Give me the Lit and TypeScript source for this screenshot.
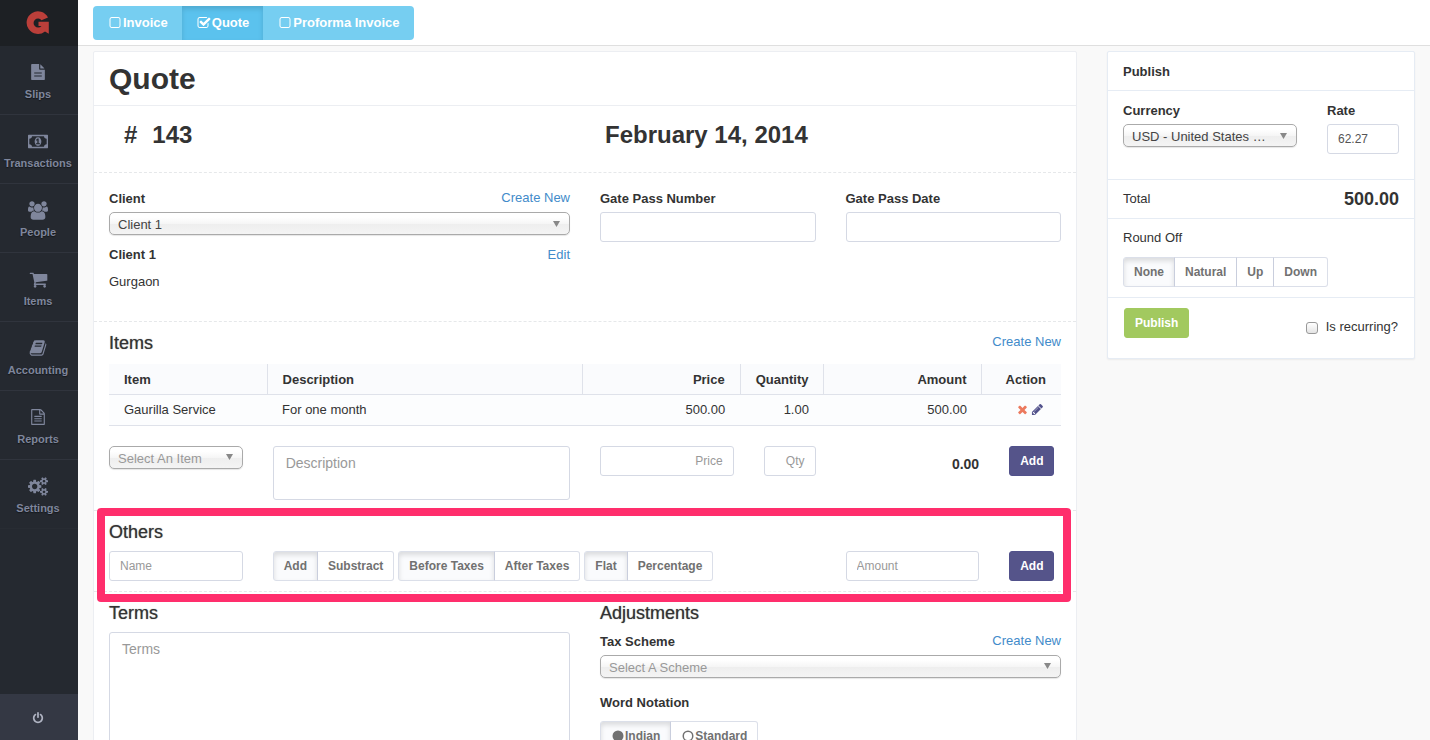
import { LitElement, html, svg, css } from "lit";
import { customElement, property } from "lit/decorators.js";
import { classMap } from "lit/directives/class-map.js";

const lines = (y: number) =>
  `M1312 ${y}v64q0 14-9 23t-23 9h-768q-14 0-23-9t-9-23v-64q0-14 9-23t23-9h768q14 0 23 9t9 23z`;

const ICONS: Record<string, { w: number; d: string }> = {
  slips: {
    w: 1792,
    d: "M1596 476q14 14 28 36h-472v-472q22 14 36 28zm-476 164h544v1056q0 40-28 68t-68 28h-1344q-40 0-68-28t-28-68v-1600q0-40 28-68t68-28h800v544q0 40 28 68t68 28zm200 736v-64q0-14-9-23t-23-9h-784q-14 0-23 9t-9 23v64q0 14 9 23t23 9h784q14 0 23-9t9-23zm0-336v-64q0-14-9-23t-23-9h-784q-14 0-23 9t-9 23v64q0 14 9 23t23 9h784q14 0 23-9t9-23z",
  },
  money: {
    w: 1920,
    d: "M768 1152h384v-96h-128v-448h-114l-148 137 77 80q42-37 55-57h2v288h-128v96zm512-256q0 70-21 142t-59.5 134-101.5 101-138 39-138-39-101.5-101-59.5-134-21-142 21-142 59.5-134 101.5-101 138-39 138 39 101.5 101 59.5 134 21 142zm512 256v-512q-106 0-181-75t-75-181h-1152q0 106-75 181t-181 75v512q106 0 181 75t75 181h1152q0-106 75-181t181-75zm128-832v1152q0 26-19 45t-45 19h-1792q-26 0-45-19t-19-45v-1152q0-26 19-45t45-19h1792q26 0 45 19t19 45z",
  },
  people: {
    w: 1920,
    d: "M593 896q-162 5-265 128h-134q-82 0-138-40.5t-56-118.5q0-353 124-353 6 0 43.5 21t97.5 42.5 119 21.5q67 0 133-23-5 37-5 66 0 139 81 256zm1071 637q0 120-73 189.5t-194 69.5h-874q-121 0-194-69.5t-73-189.5q0-53 3.5-103.5t14-109 26.5-108.5 43-97.5 62-81 85.5-53.5 111.5-20q10 0 43 21.5t73 48 107 48 135 21.5 135-21.5 107-48 73-48 43-21.5q61 0 111.5 20t85.5 53.5 62 81 43 97.5 26.5 108.5 14 109 3.5 103.5zm-1024-1277q0 106-75 181t-181 75-181-75-75-181 75-181 181-75 181 75 75 181zm704 384q0 159-112.5 271.5t-271.5 112.5-271.5-112.5-112.5-271.5 112.5-271.5 271.5-112.5 271.5 112.5 112.5 271.5zm576 225q0 78-56 118.5t-138 40.5h-134q-103-123-265-128 81-117 81-256 0-29-5-66 66 23 133 23 59 0 119-21.5t97.5-42.5 43.5-21q124 0 124 353zm-128-609q0 106-75 181t-181 75-181-75-75-181 75-181 181-75 181 75 75 181z",
  },
  cart: {
    w: 1792,
    d: "M704 1536q0 52-38 90t-90 38-90-38-38-90 38-90 90-38 90 38 38 90zm896 0q0 52-38 90t-90 38-90-38-38-90 38-90 90-38 90 38 38 90zm128-1088v512q0 24-16.5 42.5t-40.5 21.5l-1044 122q13 60 13 70 0 16-24 64h920q26 0 45 19t19 45-19 45-45 19h-1024q-26 0-45-19t-19-45q0-11 8-31.5t16-36 21.5-40 15.5-29.5l-177-823h-204q-26 0-45-19t-19-45 19-45 45-19h256q16 0 28.5 6.5t19.5 15.5 13 24.5 8 26 5.5 29.5 4.5 26h1201q26 0 45 19t19 45z",
  },
  book: {
    w: 1792,
    d: "M1703 478q40 57 18 129l-275 906q-19 64-76.5 107.5t-122.5 43.5h-923q-77 0-148.5-53.5t-99.5-131.5q-24-67-2-127 0-4 3-27t4-37q1-8-3-21.5t-3-19.5q2-11 8-21t16.5-23.5 16.5-23.5q23-38 45-91.5t30-91.5q3-10 .5-30t-.5-28q3-11 17-28t17-23q21-36 42-92t25-90q1-9-2.5-32t.5-28q4-13 22-30.5t22-22.5q19-26 42.5-84.5t27.5-96.5q1-8-3-25.5t-2-26.5q2-8 9-18t18-23 17-21q8-12 16.5-30.5t15-35 16-36 19.5-32 26.5-23.5 36-11.5 47.5 5.5l-1 3q38-9 51-9h761q74 0 114 56t18 130l-274 906q-36 119-71.5 153.5t-128.5 34.5h-869q-27 0-38 15-11 16-1 43 24 70 144 70h923q29 0 56-15.5t35-41.5l300-987q7-22 5-57 38 15 59 43zm-1064 2q-4 13 2 22.5t20 9.5h608q13 0 25.5-9.5t16.5-22.5l21-64q4-13-2-22.5t-20-9.5h-608q-13 0-25.5 9.5t-16.5 22.5zm-83 256q-4 13 2 22.5t20 9.5h608q13 0 25.5-9.5t16.5-22.5l21-64q4-13-2-22.5t-20-9.5h-608q-13 0-25.5 9.5t-16.5 22.5z",
  },
  report: {
    w: 1792,
    d:
      "M1596 380q28 28 48 76t20 88v1152q0 40-28 68t-68 28h-1344q-40 0-68-28t-28-68v-1600q0-40 28-68t68-28h896q40 0 88 20t76 48zm-444-244v376h376q-10-29-22-41l-313-313q-12-12-41-22zm384 1528v-1024h-416q-40 0-68-28t-28-68v-416h-768v1536h1280z" +
      lines(800) +
      lines(1056) +
      lines(1312),
  },
  cogs: {
    w: 1920,
    d: "M896 896q0-106-75-181t-181-75-181 75-75 181 75 181 181 75 181-75 75-181zm768 512q0-52-38-90t-90-38-90 38-38 90q0 53 37.5 90.5t90.5 37.5 90.5-37.5 37.5-90.5zm0-1024q0-52-38-90t-90-38-90 38-38 90q0 53 37.5 90.5t90.5 37.5 90.5-37.5 37.5-90.5zm-384 421v185q0 10-7 19.5t-16 10.5l-155 24q-11 35-32 76 34 48 90 115 7 11 7 20 0 12-7 19-23 30-82.5 89.5t-78.5 59.5q-11 0-21-7l-115-90q-37 19-77 31-11 108-23 155-7 24-30 24h-186q-11 0-20-7.5t-10-17.5l-23-153q-34-10-75-31l-118 89q-7 7-20 7-11 0-21-8-144-133-144-160 0-9 7-19 10-14 41-53t47-61q-23-44-35-82l-152-24q-10-1-17-9.5t-7-19.5v-185q0-10 7-19.5t16-10.5l155-24q11-35 32-76-34-48-90-115-7-11-7-20 0-12 7-20 22-30 82-89t79-59q11 0 21 7l115 90q34-18 77-32 11-108 23-154 7-24 30-24h186q11 0 20 7.5t10 17.5l23 153q34 10 75 31l118-89q8-7 20-7 11 0 21 8 144 133 144 160 0 8-7 19-12 16-42 54t-45 60q23 48 34 82l152 23q10 2 17 10.5t7 19.5zm640 533v140q0 16-149 31-12 27-30 52 51 113 51 138 0 4-4 7-122 71-124 71-8 0-46-47t-52-68q-20 2-30 2t-30-2q-14 21-52 68t-46 47q-2 0-124-71-4-3-4-7 0-25 51-138-18-25-30-52-149-15-149-31v-140q0-16 149-31 13-29 30-52-51-113-51-138 0-4 4-7 4-2 35-20t59-34 30-16q8 0 46 46.5t52 67.5q20-2 30-2t30 2q51-71 92-112l6-2q4 0 124 70 4 3 4 7 0 25-51 138 17 23 30 52 149 15 149 31zm0-1024v140q0 16-149 31-12 27-30 52 51 113 51 138 0 4-4 7-122 71-124 71-8 0-46-47t-52-68q-20 2-30 2t-30-2q-14 21-52 68t-46 47q-2 0-124-71-4-3-4-7 0-25 51-138-18-25-30-52-149-15-149-31v-140q0-16 149-31 13-29 30-52-51-113-51-138 0-4 4-7 4-2 35-20t59-34 30-16q8 0 46 46.5t52 67.5q20-2 30-2t30 2q51-71 92-112l6-2q4 0 124 70 4 3 4 7 0 25-51 138 17 23 30 52 149 15 149 31z",
  },
  power: {
    w: 1792,
    d: "M1664 896q0 156-61 298t-164 245-245 164-298 61-298-61-245-164-164-245-61-298q0-182 80.5-343t226.5-270q43-32 95.5-25t83.5 50q32 42 24.5 94.5t-49.5 84.5q-98 74-151.5 181t-53.5 228q0 104 40.5 198.5t109.5 163.5 163.5 109.5 198.5 40.5 198.5-40.5 163.5-109.5 109.5-163.5 40.5-198.5q0-121-53.5-228t-151.5-181q-42-32-49.5-84.5t24.5-94.5q31-43 84-50t95 25q146 109 226.5 270t80.5 343zm-640-768v640q0 52-38 90t-90 38-90-38-38-90v-640q0-52 38-90t90-38 90 38 38 90z",
  },
  times: {
    w: 1792,
    d: "M1490 1322q0 40-28 68l-136 136q-28 28-68 28t-68-28l-294-294-294 294q-28 28-68 28t-68-28l-136-136q-28-28-28-68t28-68l294-294-294-294q-28-28-28-68t28-68l136-136q28-28 68-28t68 28l294 294 294-294q28-28 68-28t68 28l136 136q28 28 28 68t-28 68l-294 294 294 294q28 28 28 68z",
  },
  pencil: {
    w: 1792,
    d: "M491 1536l91-91-235-235-91 91v107h128v128h107zm523-928q0-22-22-22-10 0-17 7l-542 542q-7 7-7 17 0 22 22 22 10 0 17-7l542-542q7-7 7-17zm-54-192l416 416-832 832h-416v-416zm683 96q0 53-37 90l-166 166-416-416 166-165q36-38 90-38 53 0 91 38l235 234q37 39 37 91z",
  },
  square: {
    w: 1792,
    d: "M1312 256h-832q-66 0-113 47t-47 113v832q0 66 47 113t113 47h832q66 0 113-47t47-113v-832q0-66-47-113t-113-47zm288 160v832q0 119-84.5 203.5t-203.5 84.5h-832q-119 0-203.5-84.5t-84.5-203.5v-832q0-119 84.5-203.5t203.5-84.5h832q119 0 203.5 84.5t84.5 203.5z",
  },
  check: {
    w: 1792,
    d: "M1472 930v318q0 119-84.5 203.5t-203.5 84.5h-832q-119 0-203.5-84.5t-84.5-203.5v-832q0-119 84.5-203.5t203.5-84.5h832q63 0 117 25 15 7 18 23 3 17-9 29l-49 49q-10 10-23 10-3 0-9-2-23-6-45-6h-832q-66 0-113 47t-47 113v832q0 66 47 113t113 47h832q66 0 113-47t47-113v-254q0-13 9-22l64-64q10-10 23-10 6 0 12 3 20 8 20 29zm231-489l-814 814q-24 24-57 24t-57-24l-430-430q-24-24-24-57t24-57l110-110q24-24 57-24t57 24l263 263 647-647q24-24 57-24t57 24l110 110q24 24 24 57t-24 57z",
  },
  disc: { w: 1792, d: "M896 192a704 704 0 1 0 0 1408a704 704 0 1 0 0-1408z" },
  ring: {
    w: 1792,
    d: "M896 192a704 704 0 1 0 0 1408a704 704 0 1 0 0-1408zm0 190a514 514 0 1 1 0 1028a514 514 0 1 1 0-1028z",
  },
};

const icon = (name: string, height: number) => {
  const { w, d } = ICONS[name];
  return html`<svg
    aria-hidden="true"
    viewBox="0 0 ${w} 1792"
    width=${Math.round((height * w) / 1792)}
    height=${height}
  >
    ${svg`<path fill="currentColor" fill-rule="evenodd" d=${d}></path>`}
  </svg>`;
};

const base = css`
  * {
    box-sizing: border-box;
  }
  svg {
    display: block;
    flex: none;
  }
`;

@customElement("side-nav")
class SideNav extends LitElement {
  static styles = [
    base,
    css`
      :host {
        display: flex;
        flex-direction: column;
        background: #252930;
      }
      .brand {
        display: flex;
        align-items: center;
        justify-content: center;
        height: 46px;
        padding-right: 2px;
        background: #1d2024;
      }
      .menu {
        flex: 1;
        margin: 0;
        padding: 0;
        list-style: none;
      }
      .link {
        display: flex;
        flex-direction: column;
        align-items: center;
        gap: 5px;
        height: 69px;
        padding: 17px 2px 0 0;
        border-bottom: 1px solid #30343d;
        color: #7f869c;
        font-size: 11px;
        line-height: 16px;
        font-weight: bold;
        text-decoration: none;
        text-shadow: 0 1px 1px #15181c;
      }
      .glyph {
        display: flex;
        align-items: center;
        height: 18px;
      }
      .item:last-child .link {
        border-bottom-color: #282c33;
      }
      .power {
        display: flex;
        align-items: center;
        justify-content: center;
        height: 46px;
        padding: 2px 2px 0 0;
        border: 0;
        background: #343844;
        color: #b0b4c3;
      }
    `,
  ];
  render() {
    const items: [string, string, number][] = [
      ["slips", "Slips", 16],
      ["money", "Transactions", 19],
      ["people", "People", 19],
      ["cart", "Items", 19],
      ["book", "Accounting", 18],
      ["report", "Reports", 16],
      ["cogs", "Settings", 19],
    ];
    return html`
      <a class="brand" href="#" aria-label="Home">
        <svg width="24" height="24" viewBox="0 0 24 24" aria-hidden="true">
          <path
            d="M22 6.500L15.500 9.200A4.500 4.500 0 1 0 15.500 15H12.500V10.800H22.800V22.800L19 20.400A11.300 11.300 0 1 1 22 6.500z"
            fill="#bb3f3a"
          />
        </svg>
      </a>
      <ul class="menu">
        ${items.map(
          ([name, text, size]) => html`<li class="item">
            <a class="link" href="#"
              ><span class="glyph">${icon(name, size)}</span
              ><span>${text}</span></a
            >
          </li>`
        )}
      </ul>
      <button class="power" aria-label="Log out">${icon("power", 12)}</button>
    `;
  }
}

interface Option {
  text: string;
  icon?: string;
}

@customElement("choice-group")
class ChoiceGroup extends LitElement {
  @property() label = "";
  @property() tone = "plain";
  @property({ type: Number }) selected = 0;
  @property({ attribute: false }) options: Option[] = [];
  static styles = [
    base,
    css`
      :host {
        display: inline-flex;
      }
      .group {
        display: flex;
      }
      .input {
        appearance: none;
        width: 0;
        height: 0;
        margin: 0;
      }
      .option {
        display: flex;
        align-items: center;
        height: 30px;
        padding: 0 10px;
        border: 1px solid #dbdfe9;
        background: #fff;
        color: #717171;
        font-size: 12px;
        font-weight: bold;
        white-space: nowrap;
        cursor: pointer;
      }
      .option + .option {
        margin-left: -1px;
        border-left-color: #c9cedd;
      }
      .option:first-child {
        border-radius: 3px 0 0 3px;
      }
      .option:last-child {
        border-radius: 0 3px 3px 0;
      }
      .on {
        background: #fafbfd;
        box-shadow: inset 0 3px 5px rgba(0, 0, 0, 0.125);
      }
      .blue .option {
        gap: 1px;
        height: 34px;
        padding: 0 14px;
        border: 0;
        margin: 0;
        background: #76cef1;
        color: #fff;
        font-size: 13px;
      }
      .blue .option:first-child {
        border-radius: 4px 0 0 4px;
      }
      .blue .option:last-child {
        border-radius: 0 4px 4px 0;
      }
      .blue .on {
        background: #5bc2ee;
      }
    `,
  ];
  render() {
    return html`<div
      class=${classMap({ group: true, blue: this.tone === "blue" })}
      role="radiogroup"
      aria-label=${this.label}
    >
      ${this.options.map(
        (o, i) => html`<label
          class=${classMap({ option: true, on: i === this.selected })}
          ><input
            class="input"
            type="radio"
            name="choice"
            .checked=${i === this.selected}
            @change=${() => (this.selected = i)}
          />${o.icon ? icon(o.icon, 14) : ""}<span>${o.text}</span></label
        >`
      )}
    </div>`;
  }
}

@customElement("app-root")
class AppRoot extends LitElement {
  static styles = [
    base,
    css`
      :host {
        display: grid;
        grid-template-columns: 78px minmax(0, 1fr);
        height: 100vh;
        overflow: hidden;
        background: #f9f9f9;
        color: #333;
        font: 13px/18px "Liberation Sans", Arial, sans-serif;
      }
      .view {
        display: flex;
        flex-direction: column;
        min-height: 0;
      }
      .topbar {
        flex: none;
        padding: 6px 15px 5px;
        background: #fff;
        border-bottom: 1px solid #dfdfdf;
        display: flex;
      }
      .content {
        display: grid;
        grid-template-columns: minmax(0, 3fr) minmax(0, 1fr);
        align-items: start;
        padding: 5px 0;
        overflow-y: auto;
        scrollbar-width: none;
      }
      .card {
        margin: 0 15px;
        background: #fff;
        border: 1px solid #eceef2;
        border-radius: 2px;
      }
      .title {
        margin: 0;
        padding: 0 15px;
        font-size: 30px;
        line-height: 53px;
        border-bottom: 1px solid #eceef2;
      }
      .section {
        border-bottom: 1px dashed #e6e8ea;
        padding: 11px 0 10px;
      }
      .section:last-child {
        border-bottom: 0;
      }
      .row {
        display: grid;
        grid-template-columns: repeat(12, minmax(0, 1fr));
      }
      .c1,
      .c2,
      .c3,
      .c4,
      .c6,
      .c7,
      .c8 {
        padding: 0 15px;
      }
      .c1 {
        grid-column: span 1;
      }
      .c2 {
        grid-column: span 2;
      }
      .c3 {
        grid-column: span 3;
      }
      .c4 {
        grid-column: span 4;
      }
      .c6 {
        grid-column: span 6;
      }
      .c7 {
        grid-column: span 7;
      }
      .c8 {
        grid-column: span 8;
      }
      .lead {
        padding: 16px 0 24px;
        font-size: 24px;
        line-height: 26px;
        font-weight: bold;
      }
      .number {
        display: flex;
        gap: 15px;
        padding: 0 30px;
      }
      .date {
        padding: 0 20px;
      }
      .client {
        padding: 16px 0 30px;
      }
      .head {
        display: flex;
        justify-content: space-between;
        align-items: flex-start;
        margin-bottom: 3px;
      }
      .label {
        display: block;
        margin-bottom: 3px;
        line-height: 20px;
        font-weight: bold;
      }
      .head .label {
        margin: 0;
      }
      .link {
        color: #428bca;
        text-decoration: none;
      }
      .party {
        display: flex;
        justify-content: space-between;
        margin: 11px 0 9px;
      }
      .address {
        margin: 0;
      }
      .heading {
        margin: 0;
        font-size: 18px;
        line-height: 20px;
        font-weight: normal;
        text-shadow: 0 0 1px #777;
      }
      .bar {
        display: flex;
        justify-content: space-between;
        align-items: flex-start;
        padding: 0 15px;
        margin-bottom: 11px;
      }
      .sub {
        margin-bottom: 9px;
      }
      .field {
        display: block;
        width: 100%;
        height: 30px;
        padding: 0 10px;
        border: 1px solid #d5d9e4;
        border-radius: 3px;
        background: #fff;
        color: #555;
        font: 12px "Liberation Sans", Arial, sans-serif;
      }
      .field::placeholder,
      .area::placeholder {
        color: #999;
        opacity: 1;
      }
      .end {
        text-align: right;
      }
      .area {
        display: block;
        width: 100%;
        height: 54px;
        padding: 6px 12px;
        border: 1px solid #d5d9e4;
        border-radius: 3px;
        color: #555;
        font: 14px/20px "Liberation Sans", Arial, sans-serif;
        resize: none;
      }
      .tall {
        height: 160px;
      }
      .select {
        display: block;
        width: 100%;
        height: 23px;
        padding: 2px 28px 0 8px;
        appearance: none;
        border: 1px solid #aaa;
        border-radius: 5px;
        background:
          url("data:image/svg+xml,%3Csvg xmlns='http://www.w3.org/2000/svg' width='7' height='6'%3E%3Cpath d='M0 0h7L3.5 6z' fill='%23888'/%3E%3C/svg%3E")
            no-repeat right 9px center,
          linear-gradient(#fff 20%, #f6f6f6 50%, #eee 52%, #f4f4f4);
        box-shadow: 0 1px 1px rgba(0, 0, 0, 0.1);
        color: #444;
        font: 13px "Liberation Sans", Arial, sans-serif;
        text-overflow: ellipsis;
      }
      .empty {
        color: #999;
      }
      .frame {
        padding: 0 15px;
        margin-bottom: 20px;
      }
      .table {
        width: 100%;
        table-layout: fixed;
        border-collapse: collapse;
      }
      .w1 {
        width: 8.3%;
      }
      .wq {
        width: 8.8%;
      }
      .w2 {
        width: 16.6%;
      }
      .th,
      .td {
        height: 30px;
        padding: 2px 15px 0;
        text-align: left;
        border-bottom: 1px solid #dfe2ea;
        background: #fafbfd;
        white-space: nowrap;
      }
      .td {
        height: 31px;
        padding: 0 15px;
        background: #fcfdfe;
      }
      .th + .th {
        border-left: 1px solid #dfe2ea;
      }
      .table .end {
        text-align: right;
      }
      .actions {
        display: flex;
        justify-content: flex-end;
        gap: 2px;
        padding-right: 2px;
      }
      .tool {
        display: flex;
        padding: 0;
        border: 0;
        background: none;
        color: #51518b;
      }
      .danger {
        color: #ec7a5e;
      }
      .sum {
        display: block;
        padding-top: 9px;
        font-size: 14px;
        font-weight: bold;
        text-align: right;
      }
      .button {
        height: 30px;
        padding: 0 10px;
        border: 1px solid #51518b;
        border-radius: 3px;
        background: #55548a;
        color: #fff;
        font: bold 12px "Liberation Sans", Arial, sans-serif;
      }
      .green {
        border-color: #a2c95f;
        background: #a2c95f;
      }
      .others {
        position: relative;
      }
      .marker {
        position: absolute;
        inset: -3px 5px -11px 3px;
        border: 8px solid #ff2e6c;
        border-radius: 4px;
        pointer-events: none;
      }
      .groups {
        display: flex;
        gap: 4px;
      }
      .scheme {
        margin-bottom: 15px;
      }
      .spaced {
        margin-bottom: 8px;
      }
      .side {
        border-color: #e6ecf4;
        box-shadow: 0 1px 2px rgba(0, 0, 0, 0.06);
      }
      .block {
        padding: 10px 15px;
        border-bottom: 1px solid #e6ecf4;
      }
      .money {
        padding: 10px 0 25px;
        border-bottom: 1px solid #e6ecf4;
      }
      .caption {
        margin: 0;
        padding: 10px 15px 8px;
        font-size: 13px;
        line-height: 20px;
        border-bottom: 1px solid #e6ecf4;
      }
      .total {
        display: flex;
        justify-content: space-between;
        align-items: center;
        padding: 10px 15px;
        border-bottom: 1px solid #e6ecf4;
      }
      .grand {
        font-size: 18px;
      }
      .round {
        display: block;
        margin-bottom: 10px;
      }
      .final {
        display: flex;
        justify-content: space-between;
        align-items: flex-start;
        padding: 10px 16px 20px;
      }
      .recurring {
        display: flex;
        align-items: center;
        gap: 8px;
        padding-top: 10px;
      }
      .tick {
        appearance: none;
        width: 12px;
        height: 12px;
        margin: 2px 0 0;
        border: 1px solid #999;
        border-radius: 3px;
        background: linear-gradient(#fff, #e4e4e4);
      }
    `,
  ];

  render() {
    return html`
      <side-nav></side-nav>
      <div class="view">
        <header class="topbar">
          <choice-group
            label="Document type"
            tone="blue"
            .selected=${1}
            .options=${[
              { text: "Invoice", icon: "square" },
              { text: "Quote", icon: "check" },
              { text: "Proforma Invoice", icon: "square" },
            ]}
          ></choice-group>
        </header>
        <div class="content">
          <main class="card">
            <h1 class="title">Quote</h1>
            <div class="section lead row">
              <div class="c6 number"><span>#</span><span>143</span></div>
              <div class="c6 date">February 14, 2014</div>
            </div>
            <div class="section client row">
              <div class="c6">
                <div class="head">
                  <label class="label" for="client">Client</label>
                  <a class="link" href="#">Create New</a>
                </div>
                <select class="select" id="client">
                  <option>Client 1</option>
                </select>
                <div class="party">
                  <strong>Client 1</strong><a class="link" href="#">Edit</a>
                </div>
                <p class="address">Gurgaon</p>
              </div>
              <div class="c3">
                <label class="label" for="gpn">Gate Pass Number</label>
                <input class="field" id="gpn" />
              </div>
              <div class="c3">
                <label class="label" for="gpd">Gate Pass Date</label>
                <input class="field" id="gpd" />
              </div>
            </div>
            <section class="section">
              <div class="bar">
                <h2 class="heading">Items</h2>
                <a class="link" href="#">Create New</a>
              </div>
              <div class="frame">
                <table class="table">
                  <colgroup>
                    <col class="w2" />
                    <col />
                    <col class="w2" />
                    <col class="wq" />
                    <col class="w2" />
                    <col class="w1" />
                  </colgroup>
                  <thead>
                    <tr>
                      <th class="th">Item</th>
                      <th class="th">Description</th>
                      <th class="th end">Price</th>
                      <th class="th end">Quantity</th>
                      <th class="th end">Amount</th>
                      <th class="th end">Action</th>
                    </tr>
                  </thead>
                  <tbody>
                    <tr>
                      <td class="td">Gaurilla Service</td>
                      <td class="td">For one month</td>
                      <td class="td end">500.00</td>
                      <td class="td end">1.00</td>
                      <td class="td end">500.00</td>
                      <td class="td">
                        <div class="actions">
                          <button class="tool danger" aria-label="Remove">
                            ${icon("times", 13)}
                          </button>
                          <button class="tool" aria-label="Edit item">
                            ${icon("pencil", 13)}
                          </button>
                        </div>
                      </td>
                    </tr>
                  </tbody>
                </table>
              </div>
              <div class="row">
                <div class="c2">
                  <select class="select empty" aria-label="Item">
                    <option>Select An Item</option>
                  </select>
                </div>
                <div class="c4">
                  <textarea
                    class="area"
                    placeholder="Description"
                    aria-label="Description"
                  ></textarea>
                </div>
                <div class="c2">
                  <input class="field end" placeholder="Price" aria-label="Price" />
                </div>
                <div class="c1">
                  <input class="field end" placeholder="Qty" aria-label="Quantity" />
                </div>
                <div class="c2"><output class="sum">0.00</output></div>
                <div class="c1"><button class="button">Add</button></div>
              </div>
            </section>
            <section class="section others">
              <div class="bar sub"><h2 class="heading">Others</h2></div>
              <div class="row">
                <div class="c2">
                  <input class="field" placeholder="Name" aria-label="Name" />
                </div>
                <div class="c7 groups">
                  <choice-group
                    label="Operation"
                    .options=${[{ text: "Add" }, { text: "Substract" }]}
                  ></choice-group>
                  <choice-group
                    label="Tax order"
                    .options=${[{ text: "Before Taxes" }, { text: "After Taxes" }]}
                  ></choice-group>
                  <choice-group
                    label="Kind"
                    .options=${[{ text: "Flat" }, { text: "Percentage" }]}
                  ></choice-group>
                </div>
                <div class="c2">
                  <input class="field" placeholder="Amount" aria-label="Amount" />
                </div>
                <div class="c1"><button class="button">Add</button></div>
              </div>
              <div class="marker"></div>
            </section>
            <div class="section row">
              <section class="c6">
                <h2 class="heading sub">Terms</h2>
                <textarea
                  class="area tall"
                  placeholder="Terms"
                  aria-label="Terms"
                ></textarea>
              </section>
              <section class="c6">
                <h2 class="heading sub">Adjustments</h2>
                <div class="head">
                  <label class="label" for="scheme">Tax Scheme</label>
                  <a class="link" href="#">Create New</a>
                </div>
                <select class="select empty scheme" id="scheme">
                  <option>Select A Scheme</option>
                </select>
                <span class="label spaced">Word Notation</span>
                <choice-group
                  label="Word Notation"
                  .options=${[
                    { text: "Indian", icon: "disc" },
                    { text: "Standard", icon: "ring" },
                  ]}
                ></choice-group>
              </section>
            </div>
          </main>
          <aside class="card side">
            <h2 class="caption">Publish</h2>
            <div class="row money">
              <div class="c8">
                <label class="label" for="currency">Currency</label>
                <select class="select" id="currency">
                  <option>USD - United States Dollar</option>
                </select>
              </div>
              <div class="c4">
                <label class="label" for="rate">Rate</label>
                <input class="field" id="rate" .value=${"62.27"} />
              </div>
            </div>
            <div class="total">
              <span>Total</span><strong class="grand">500.00</strong>
            </div>
            <div class="block">
              <span class="round">Round Off</span>
              <choice-group
                label="Round Off"
                .options=${[
                  { text: "None" },
                  { text: "Natural" },
                  { text: "Up" },
                  { text: "Down" },
                ]}
              ></choice-group>
            </div>
            <div class="final">
              <button class="button green">Publish</button>
              <label class="recurring"
                ><input class="tick" type="checkbox" />Is recurring?</label
              >
            </div>
          </aside>
        </div>
      </div>
    `;
  }
}
